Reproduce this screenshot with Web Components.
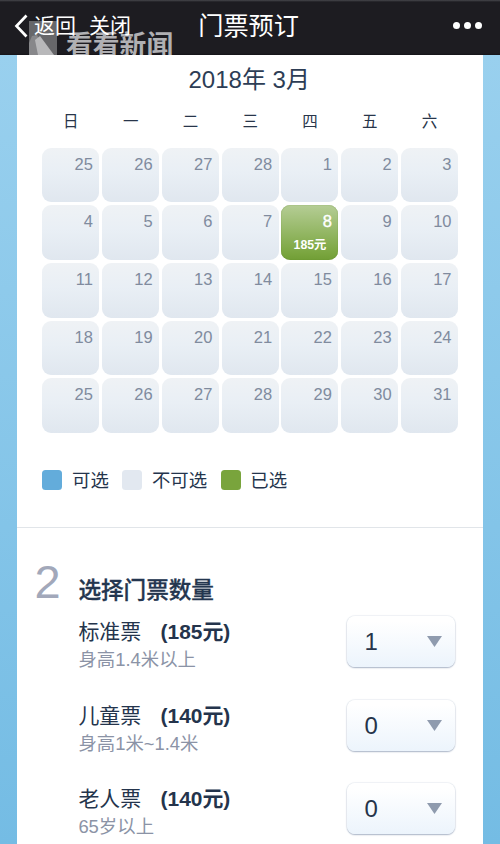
<!DOCTYPE html>
<html lang="zh-CN">
<head>
<meta charset="utf-8">
<title>门票预订</title>
<style>
html,body{margin:0;height:844px;overflow:hidden}
body{font-family:"Liberation Sans","Noto Sans CJK SC",sans-serif;color:#24344c}
</style>
</head>
<body>
<booking-page></booking-page>
<script>
const define = (name, html) => customElements.define(name, class extends HTMLElement {
  connectedCallback() {
    if (this.shadowRoot) return;
    const t = document.createElement('template');
    t.innerHTML = typeof html === 'function' ? html(this) : html;
    this.attachShadow({mode: 'open'}).append(t.content.cloneNode(true));
  }
});

define('nav-bar', `<style>
:host{display:flex;position:relative;height:55px;box-sizing:border-box;padding:0 18px 4px 14px;align-items:center;background:linear-gradient(#47474c 0,#1d1c21 2px,#1d1c21 53px,#141318 55px);color:#fff;overflow:hidden}
.mark{position:absolute;left:29px;top:21px;display:flex;color:#b0b0b3}
.mark svg{display:block}
.mark span{font:700 26.8px/34px "Noto Sans CJK SC",sans-serif;margin:6px 0 0 9px;white-space:nowrap}
nav{display:flex;flex:1;position:relative;align-items:center;font-size:21px;line-height:28px}
nav svg{margin-right:5px}
nav span{padding-top:1px}
nav span+span{margin-left:13px}
h1{position:relative;left:.6px;margin:0;font-size:25.2px;font-weight:400;line-height:32px;white-space:nowrap}
.dots{position:relative;flex:1;display:flex;justify-content:flex-end;gap:4px}
.dots i{width:7px;height:7px;border-radius:50%;background:#fff}
</style>
<div class="mark"><svg width="28" height="34" viewBox="0 0 28 34"><path d="M0 0H28V34H0Z" fill="#67676a"/><path d="M3 15L8 14L18 34H0V22Z" fill="#87878a"/><path d="M6 19L11 15L25 34H9Z" fill="#b8b8ba"/></svg><span>看看新闻</span></div>
<nav><svg width="15" height="24" viewBox="0 0 15 24"><path d="M12.5 1.5L2.5 12L12.5 22.5" fill="none" stroke="#fff" stroke-width="2.7"/></svg><span>返回</span><span>关闭</span></nav>
<h1>门票预订</h1>
<div class="dots"><i></i><i></i><i></i></div>`);

define('day-cell', `<style>
:host{display:flex;flex-direction:column;box-sizing:border-box;height:54.7px;border-radius:9px;padding:7px 6.5px 0;background:linear-gradient(#eff2f5,#e9eff5 45%,#e0e7ef);color:#808b9e;text-align:right;font-size:16.5px;line-height:19px}
:host([selected]){background:linear-gradient(#b5cd95,#7ca742 85%,#719e35);color:#fff;box-shadow:inset 0 0 1px #5f862c}
:host([selected]) .d{-webkit-text-stroke:.4px #fff}
.p{font-size:12.3px;font-weight:700;line-height:16px;text-align:center;margin-top:6px;white-space:nowrap}
</style><span class="d"><slot></slot></span><span class="p"><slot name="price"></slot></span>`);

define('month-calendar', () => {
  const days = [25,26,27,28,...Array.from({length:31},(_,i)=>i+1)];
  return `<style>
:host{display:block;padding:10px 25px 0 25px}
h2{margin:0;font-size:24px;font-weight:400;line-height:30px;text-align:center;text-indent:-2px;color:#2d3d55}
.grid{display:grid;grid-template-columns:repeat(7,1fr);column-gap:2.8px;row-gap:3px}
.week{margin:16px 0 14.6px;font-size:15.5px;line-height:22px;text-align:center;color:#28354a}
</style><h2>2018年 3月</h2>
<div class="grid week">${[...'日一二三四五六'].map(d=>`<span>${d}</span>`).join('')}</div>
<div class="grid">${days.map(d=>d===8?`<day-cell selected>8<span slot="price">185元</span></day-cell>`:`<day-cell>${d}</day-cell>`).join('')}</div>`;
});

define('legend-item', `<style>
:host{display:flex;align-items:center;font-size:18.4px;line-height:24px;white-space:nowrap}
i{width:20px;height:20px;border-radius:3.5px;background:var(--swatch);margin-right:9.5px}
span{padding-top:1px}
</style><i></i><span><slot></slot></span>`);

define('count-select', `<style>
:host{display:flex;box-sizing:border-box;width:108px;height:51px;align-items:center;justify-content:space-between;padding:1px 13px 0 17px;border-radius:8px;background:linear-gradient(#fff 10%,#ecf4fc);box-shadow:0 0 1.5px #b9c4d3,0 1px 1.5px #a9b4c6;font-size:24px;line-height:28px;color:#26344a}
svg{display:block;margin-top:-1px}
</style><slot></slot><svg width="15" height="11" viewBox="0 0 15 11"><path d="M0 0H15L7.5 11Z" fill="#8f9bae"/></svg>`);

define('ticket-row', `<style>
:host{display:flex;justify-content:space-between;align-items:flex-start;height:83.2px}
.top{display:flex;gap:19.5px;font-size:20.9px;line-height:28px;white-space:nowrap}
.sub{font-size:18.4px;line-height:24px;color:#8b93a6;margin-top:2px;white-space:nowrap}
count-select{margin-top:-2px}
</style><div><div class="top"><slot name="name"></slot><b><slot name="price"></slot></b></div><div class="sub"><slot></slot></div></div>
<count-select><slot name="count"></slot></count-select>`);

define('booking-page', () => {
  const rows = [['标准票','(185元)','身高1.4米以上',1],['儿童票','(140元)','身高1米~1.4米',0],['老人票','(140元)','65岁以上',0]];
  return `<style>
:host{display:flex;flex-direction:column;width:500px;height:844px;overflow:hidden;background:linear-gradient(#99d0ee 55px,#74bce4)}
main{flex:1;min-height:0;margin:0 17px 0 17.4px;background:#fff;overflow:hidden}
.legend{display:flex;gap:13.7px;margin:34.6px 25.1px 0}
section{display:grid;grid-template-columns:61px 1fr;border-top:1px solid #e1e5e9;margin-top:34.2px;padding-right:27.6px}
.step{font-size:47px;line-height:50px;color:#a2a8ba;padding:29px 0 0 17px}
h2{margin:45.9px 0 14.7px;font-size:22.6px;line-height:30px;font-weight:500;-webkit-text-stroke:.3px;color:#24364f;font-family:"Noto Sans CJK SC",sans-serif}
</style><nav-bar></nav-bar><main><month-calendar></month-calendar>
<div class="legend"><legend-item style="--swatch:#63acdb">可选</legend-item><legend-item style="--swatch:#e2e8f0">不可选</legend-item><legend-item style="--swatch:#79a43c">已选</legend-item></div>
<section><div class="step">2</div><div><h2>选择门票数量</h2>
${rows.map(r=>`<ticket-row><span slot="name">${r[0]}</span><span slot="price">${r[1]}</span>${r[2]}<span slot="count">${r[3]}</span></ticket-row>`).join('')}
</div></section></main>`;
});
</script>
</body>
</html>
